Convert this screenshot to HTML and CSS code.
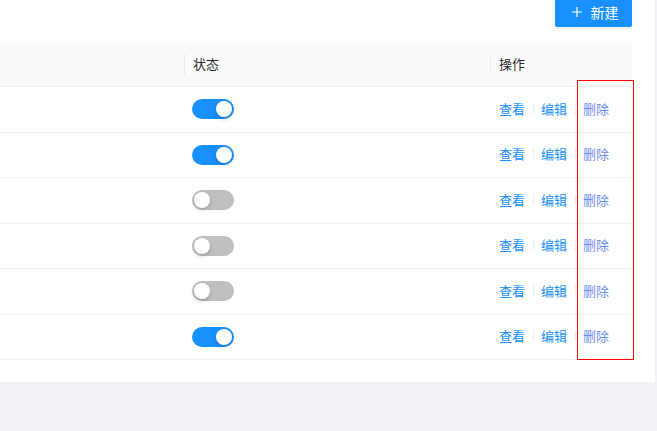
FILE: index.html
```html
<!DOCTYPE html>
<html lang="zh-CN">
<head>
<meta charset="utf-8">
<link rel="stylesheet" href="styles.css">
</head>
<body>
<div class="panel">
  <div class="toolbar">
    <button class="btn-primary">
      <svg class="plus" viewBox="0 0 10 10" width="10" height="10"><path d="M5 0v10M0 5h10" stroke="#fff" stroke-width="1.2" fill="none"/></svg>
      <span>新建</span>
    </button>
  </div>
  <div class="table-wrap">
    <div class="row head">
      <div class="cell"></div>
      <div class="cell th"><span>状态</span></div>
      <div class="cell th"><span>操作</span></div>
    </div>
    <div class="row"><div class="cell"></div><div class="cell"><span class="switch on"><i></i></span></div><div class="cell actions"><a class="link">查看</a><em class="divider"></em><a class="link">编辑</a><em class="divider"></em><a class="link del">删除</a></div></div>
    <div class="row"><div class="cell"></div><div class="cell"><span class="switch on"><i></i></span></div><div class="cell actions"><a class="link">查看</a><em class="divider"></em><a class="link">编辑</a><em class="divider"></em><a class="link del">删除</a></div></div>
    <div class="row"><div class="cell"></div><div class="cell"><span class="switch"><i></i></span></div><div class="cell actions"><a class="link">查看</a><em class="divider"></em><a class="link">编辑</a><em class="divider"></em><a class="link del">删除</a></div></div>
    <div class="row"><div class="cell"></div><div class="cell"><span class="switch"><i></i></span></div><div class="cell actions"><a class="link">查看</a><em class="divider"></em><a class="link">编辑</a><em class="divider"></em><a class="link del">删除</a></div></div>
    <div class="row"><div class="cell"></div><div class="cell"><span class="switch"><i></i></span></div><div class="cell actions"><a class="link">查看</a><em class="divider"></em><a class="link">编辑</a><em class="divider"></em><a class="link del">删除</a></div></div>
    <div class="row"><div class="cell"></div><div class="cell"><span class="switch on"><i></i></span></div><div class="cell actions"><a class="link">查看</a><em class="divider"></em><a class="link">编辑</a><em class="divider"></em><a class="link del">删除</a></div></div>
    <div class="highlight"></div>
  </div>
</div>
</body>
</html>
```
FILE: styles.css
```css
html, body {
  margin: 0;
  padding: 0;
}
body {
  background: #f0f2f5;
  font-family: "Noto Sans CJK SC", "Noto Sans", sans-serif;
  font-size: 13px;
  color: rgba(0,0,0,0.85);
  width: 657px;
  height: 431px;
  overflow: hidden;
}
.panel {
  width: 655px;
  height: 382px;
  background: #fff;
  box-sizing: border-box;
}
.toolbar {
  display: flex;
  justify-content: flex-end;
  width: 632px;
  height: 27px;
  margin-bottom: 16px;
}
.btn-primary {
  display: flex;
  align-items: center;
  justify-content: center;
  gap: 9px;
  width: 77px;
  height: 27px;
  padding: 0 0 4px 3px;
  border: none;
  border-radius: 0 0 2px 2px;
  background: #1890ff;
  color: #fff;
  font-family: inherit;
  font-size: 14px;
  line-height: 1;
  box-shadow: 0 2px 0 rgba(0,0,0,0.045);
}
.plus {
  display: block;
}
.table-wrap {
  position: relative;
  width: 632px;
}
.row {
  display: grid;
  grid-template-columns: 184px 306px 142px;
  height: 45.5px;
  border-bottom: 1px solid #f0f0f0;
  box-sizing: border-box;
}
.row.head {
  height: 44px;
  background: #fafafa;
}
.cell {
  display: flex;
  align-items: center;
  padding: 0 8px;
  position: relative;
}
.th {
  padding-bottom: 2px;
}
.th span {
  padding-left: 1px;
  line-height: 1;
}
.th::before {
  content: "";
  position: absolute;
  left: 0;
  top: 50%;
  width: 1px;
  height: 21px;
  margin-top: -11px;
  background: #ececec;
}
.switch {
  position: relative;
  display: inline-block;
  width: 42px;
  height: 20px;
  border-radius: 10px;
  background: #bfbfbf;
}
.switch.on {
  background: #1890ff;
}
.switch i {
  position: absolute;
  top: 2px;
  left: 2px;
  width: 16px;
  height: 16px;
  border-radius: 50%;
  background: #fff;
  box-shadow: 0 2px 4px rgba(0,35,11,0.2);
}
.switch.on i {
  left: 24px;
}
.actions {
  padding-left: 9px;
  padding-bottom: 2px;
}
.link {
  color: #1890ff;
  line-height: 1;
}
.link.del {
  color: #6f8cf3;
}
.divider {
  display: inline-block;
  width: 1px;
  height: 11px;
  margin: 0 7.5px;
  background: #ececec;
}
.highlight {
  position: absolute;
  left: 577px;
  top: 37px;
  width: 57px;
  height: 280px;
  border: 1px solid #ff0000;
  box-sizing: border-box;
}
```
